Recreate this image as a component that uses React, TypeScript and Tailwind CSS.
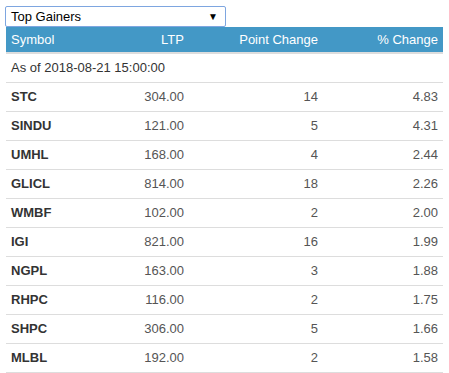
import React from 'react';

const rows = [
  ['STC', '304.00', '14', '4.83'],
  ['SINDU', '121.00', '5', '4.31'],
  ['UMHL', '168.00', '4', '2.44'],
  ['GLICL', '814.00', '18', '2.26'],
  ['WMBF', '102.00', '2', '2.00'],
  ['IGI', '821.00', '16', '1.99'],
  ['NGPL', '163.00', '3', '1.88'],
  ['RHPC', '116.00', '2', '1.75'],
  ['SHPC', '306.00', '5', '1.66'],
  ['MLBL', '192.00', '2', '1.58'],
];

const App = () => {
  return (
    <div className="bg-white w-[449px] h-[373px] overflow-hidden pt-[6px] pl-[5px] text-[13px] text-[#333] font-['Liberation_Sans',Arial,sans-serif]">
      <div className="w-[221px] h-[21px] border border-[#7ea6e0] rounded-[2px] flex items-center justify-between pl-[5px] pr-[7px] text-black leading-none">
        <span>Top Gainers</span>
        <span className="text-[10px]">▼</span>
      </div>
      <table className="table-fixed border-collapse w-[437px] ml-[1px]">
        <colgroup>
          <col className="w-[74px]" />
          <col className="w-[109px]" />
          <col className="w-[134px]" />
          <col className="w-[120px]" />
        </colgroup>
        <thead>
          <tr className="bg-[#4398c6] text-white border-b-2 border-[#ddd]">
            <th className="h-[26px] px-[5px] text-left font-normal">Symbol</th>
            <th className="px-[5px] text-right font-normal">LTP</th>
            <th className="px-[5px] text-right font-normal">Point Change</th>
            <th className="px-[5px] text-right font-normal">% Change</th>
          </tr>
        </thead>
        <tbody>
          <tr className="border-b border-[#ddd]">
            <td colSpan={4} className="h-[29px] px-[5px]">
              As of 2018-08-21 15:00:00
            </td>
          </tr>
          {rows.map((r) => (
            <tr key={r[0]} className="border-b border-[#ddd] text-[#555]">
              <td className="h-[29px] px-[5px] font-bold text-[#333]">{r[0]}</td>
              <td className="px-[5px] text-right">{r[1]}</td>
              <td className="px-[5px] text-right">{r[2]}</td>
              <td className="px-[5px] text-right">{r[3]}</td>
            </tr>
          ))}
        </tbody>
      </table>
    </div>
  );
};

export default App;
